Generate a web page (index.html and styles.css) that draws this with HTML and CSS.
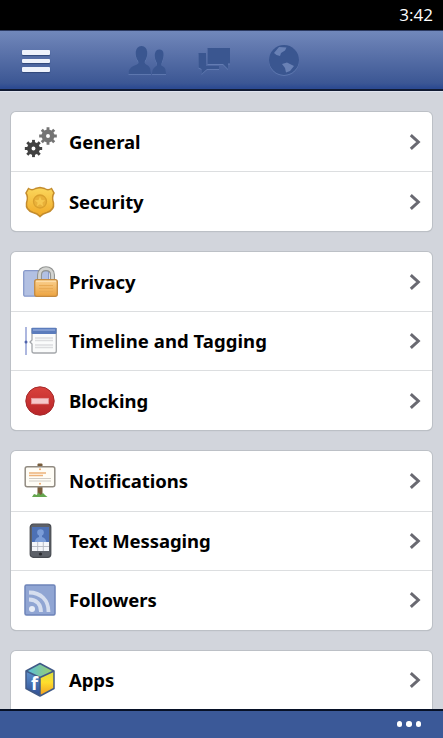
FILE: index.html
```html
<!DOCTYPE html>
<html lang="en">
<head>
    <meta charset="UTF-8">
    <meta name="viewport" content="width=device-width, initial-scale=1.0">
    <title>Settings</title>
    <link rel="stylesheet" href="styles.css">
</head>
<body>
    <svg class="defs" width="0" height="0">
        <symbol id="chevron" viewBox="0 0 12 18">
            <path d="M1.8 2.2 L9.3 9 L1.8 15.8" fill="none" stroke="#696971" stroke-width="3"/>
        </symbol>
        <symbol id="gear" viewBox="-10 -10 20 20">
            <circle r="4.700" fill="none" stroke="currentColor" stroke-width="5"/>
            <path d="M0 -9.8V-6M0 9.8V6M-9.8 0H-6M9.8 0H6M-6.9 -6.9L-4.5 -4.5M6.9 6.9L4.5 4.5M-6.9 6.9L-4.5 4.5M6.9 -6.9L4.5 -4.5" stroke="currentColor" stroke-width="3.2"/>
        </symbol>
    </svg>

    <div class="screen">
        <div class="status-bar">3:42</div>

        <header class="header">
            <div class="menu">
                <span></span>
                <span></span>
                <span></span>
            </div>
            <svg class="nav-icon friends" width="38" height="30" viewBox="0 0 38 30">
                <path d="M24 29 C24 24.500 26 22.500 28.500 21 C29.500 20 29 18.500 28.300 17 C25.500 11 26.500 4.500 31.300 4.500 C36.500 4.500 36.500 11 34 17 C33.200 19 33.200 20.500 34 21 C37 22.500 38 24 38 29Z"/>
                <path d="M0.500 29 C0.500 23 4 21.500 9 19.500 C11 18.500 10.500 17 10 16 C6.500 11 6.500 1 13.500 1 C20.500 1 20.500 11 17 16 C16.500 17 16.500 18.500 18 19.500 C21 21 23 23 23 29Z"/>
            </svg>
            <svg class="nav-icon messages" width="34" height="30" viewBox="0 0 34 30">
                <path d="M0.500 8 H8 V21 H21 V24 H9 L3.500 29 V24 L0.500 22.500Z"/>
                <path d="M9.500 3 H32 V18.500 H30 V24 L25 19 H9.500Z"/>
            </svg>
            <svg class="nav-icon globe" width="32" height="32" viewBox="0 0 32 32">
                <circle cx="16" cy="16" r="15"/>
                <path class="land" d="M6 9 L11 3 L18.500 3.500 L17 6.500 L13 9 L12 12 L8.500 11Z M14 20 L19 18.500 L26 22 L22 27 L18 28.500 L17 24Z"/>
            </svg>
        </header>

        <main class="content">
            <ul class="card">
                <li class="row">
                    <svg class="icon" width="34" height="36" viewBox="0 0 34 36">
                        <use class="gear-dark" href="#gear" x="1.500" y="15.500" width="18" height="18"/>
                        <use class="gear-light" href="#gear" x="16" y="3" width="18" height="18"/>
                    </svg>
                    <span class="label">General</span>
                    <svg class="chevron" width="12" height="18"><use href="#chevron"/></svg>
                </li>
                <li class="row">
                    <svg class="icon" width="34" height="36" viewBox="0 0 34 36">
                        <defs>
                            <linearGradient id="gold" x2="0" y2="1">
                                <stop offset="0" stop-color="#fbd75c"/>
                                <stop offset="1" stop-color="#f0a927"/>
                            </linearGradient>
                        </defs>
                        <path d="M5.500 4.500 Q9 7 12.500 4.500 L17 3.500 L21.500 4.500 Q25 7 28.500 4.500 L31 9 Q28.500 13 30.500 19 Q31.500 26 24 28.500 Q19.500 29.500 17 32.500 Q14.500 29.500 10 28.500 Q2.500 26 3.500 19 Q5.500 13 3 9Z" fill="url(#gold)" stroke="#c48c2d" stroke-width="1.500"/>
                        <circle cx="17" cy="17.500" r="6.500" fill="#e9b13a" stroke="#d9a02d" stroke-width="1.300"/>
                        <path d="M17 12.500 L18.500 16 L22.200 16.300 L19.400 18.700 L20.200 22.300 L17 20.300 L13.800 22.300 L14.600 18.700 L11.800 16.300 L15.500 16Z" fill="#f6c84f"/>
                    </svg>
                    <span class="label">Security</span>
                    <svg class="chevron" width="12" height="18"><use href="#chevron"/></svg>
                </li>
            </ul>

            <ul class="card">
                <li class="row">
                    <svg class="icon" width="36" height="36" viewBox="0 0 36 36">
                        <defs>
                            <linearGradient id="lock" x2="0" y2="1">
                                <stop offset="0" stop-color="#fad190"/>
                                <stop offset="1" stop-color="#eca340"/>
                            </linearGradient>
                        </defs>
                        <rect x="0.700" y="6.700" width="25" height="25.500" rx="1.500" fill="#b2c0e2" stroke="#8799ca" stroke-width="1.300"/>
                        <path d="M16.500 17 V11 C16.500 2.500 29.500 2.500 29.500 11 V17" fill="none" stroke="#929492" stroke-width="5"/>
                        <path d="M16.500 17 V11 C16.500 2.500 29.500 2.500 29.500 11 V17" fill="none" stroke="#d3d4d1" stroke-width="2.800"/>
                        <rect x="11.700" y="15.700" width="22.600" height="16.600" rx="2" fill="url(#lock)" stroke="#c48a40" stroke-width="1.300"/>
                        <path d="M16 21.500H30M16 24.500H30M16 27.500H30" stroke="#e9ab55"/>
                        <path d="M13 17.300H33" stroke="#ffe3b4"/>
                    </svg>
                    <span class="label">Privacy</span>
                    <svg class="chevron" width="12" height="18"><use href="#chevron"/></svg>
                </li>
                <li class="row">
                    <svg class="icon" width="34" height="36" viewBox="0 0 34 36">
                        <path d="M3 4V32" stroke="#adb7df" stroke-width="2"/>
                        <circle cx="3" cy="19" r="1.500" fill="#5064ac"/>
                        <path d="M9 5.700 H33.300 V28 Q33.300 30 31.300 30 H11 Q9 30 9 28 V21 L7 19 L9 17Z" fill="#fafbfb" stroke="#a4a7ab" stroke-width="1.300"/>
                        <rect x="8.500" y="4.700" width="25" height="6.300" rx="1" fill="#5b7cbc"/>
                        <path d="M10 7H32" stroke="#8ca6d8" stroke-width="1.500"/>
                        <path d="M12 15H30M12 17.500H30M12 22H30M12 24.500H30" stroke="#dcdddf" stroke-width="1.300"/>
                    </svg>
                    <span class="label timeline">Timeline and Tagging</span>
                    <svg class="chevron" width="12" height="18"><use href="#chevron"/></svg>
                </li>
                <li class="row">
                    <svg class="icon" width="34" height="36" viewBox="0 0 34 36">
                        <defs>
                            <linearGradient id="stop" x2="0" y2="1">
                                <stop offset="0" stop-color="#d9423c"/>
                                <stop offset="1" stop-color="#b92529"/>
                            </linearGradient>
                        </defs>
                        <circle cx="17" cy="18" r="14.200" fill="url(#stop)" stroke="#a52a2b"/>
                        <rect x="8.500" y="15.300" width="17" height="5.600" fill="#f5c8ca" stroke="#e99c9d" stroke-width="0.700"/>
                    </svg>
                    <span class="label">Blocking</span>
                    <svg class="chevron" width="12" height="18"><use href="#chevron"/></svg>
                </li>
            </ul>

            <ul class="card">
                <li class="row">
                    <svg class="icon" width="34" height="36" viewBox="0 0 34 36">
                        <rect x="14.500" y="0.500" width="5" height="33" rx="1" fill="#795d3b"/>
                        <path d="M9 34 L11 31 L14 32 L15.500 29.500 L17.500 32 L20 30 L22 32 L24.500 34Z" fill="#65a64e"/>
                        <rect x="2.200" y="3.700" width="29.600" height="20.100" rx="2" fill="#fffdf6" stroke="#918b82" stroke-width="1.500"/>
                        <path d="M6 10H23M6 12.500H20" stroke="#edb379" stroke-width="1.300"/>
                        <path d="M6 15.500H28M6 18H28" stroke="#d0ccc5"/>
                        <circle cx="17" cy="6.300" r="1" fill="#e9a66c"/>
                        <circle cx="17" cy="20.700" r="1" fill="#e9a66c"/>
                    </svg>
                    <span class="label">Notifications</span>
                    <svg class="chevron" width="12" height="18"><use href="#chevron"/></svg>
                </li>
                <li class="row">
                    <svg class="icon" width="34" height="36" viewBox="0 0 34 36">
                        <rect x="7.200" y="1.200" width="20.600" height="33.100" rx="3" fill="#5c6068" stroke="#484b51" stroke-width="1.200"/>
                        <rect x="9" y="4" width="17" height="23" fill="#4d71b5"/>
                        <circle cx="17.500" cy="9.500" r="3.300" fill="#7b9dd8"/>
                        <path d="M11.500 20 Q12 15 16 14 V11 H19 V14 Q23 15 23.500 20Z" fill="#7b9dd8"/>
                        <rect x="9" y="19" width="17" height="9" fill="#f4f6fa"/>
                        <path d="M14.700 19V28M20.300 19V28M9 23.500H26" stroke="#b4b8c2" stroke-width="0.900"/>
                        <circle cx="17.500" cy="31" r="1.600" fill="#292b30"/>
                    </svg>
                    <span class="label">Text Messaging</span>
                    <svg class="chevron" width="12" height="18"><use href="#chevron"/></svg>
                </li>
                <li class="row">
                    <svg class="icon" width="34" height="36" viewBox="0 0 34 36">
                        <rect x="2" y="3" width="30" height="30" rx="1.500" fill="#90a5d3" stroke="#6e84b9" stroke-width="1.500"/>
                        <circle cx="9" cy="27" r="3" fill="#e8edf7"/>
                        <path d="M6 17.500 C13.500 17.500 18 22 18 30 M6 10.500 C18 10.500 25.500 18 25.500 30" fill="none" stroke="#d6deef" stroke-width="3.800"/>
                    </svg>
                    <span class="label">Followers</span>
                    <svg class="chevron" width="12" height="18"><use href="#chevron"/></svg>
                </li>
            </ul>

            <ul class="card">
                <li class="row">
                    <svg class="icon" width="34" height="36" viewBox="0 0 34 36">
                        <defs>
                            <linearGradient id="cubeTop">
                                <stop offset="0" stop-color="#54bde3"/>
                                <stop offset="1" stop-color="#a0d063"/>
                            </linearGradient>
                            <linearGradient id="cubeLeft" x2="0" y2="1">
                                <stop offset="0" stop-color="#5e93ce"/>
                                <stop offset="1" stop-color="#304e93"/>
                            </linearGradient>
                            <linearGradient id="cubeRight" x2="0" y2="1">
                                <stop offset="0" stop-color="#d8df40"/>
                                <stop offset="0.450" stop-color="#ffde2d"/>
                                <stop offset="1" stop-color="#f09b22"/>
                            </linearGradient>
                        </defs>
                        <path d="M17 1.500 L31 9 L17 15.500 L3 9Z" fill="url(#cubeTop)"/>
                        <path d="M3 9 L17 15.500 V34 L3 26.500Z" fill="url(#cubeLeft)"/>
                        <path d="M31 9 L17 15.500 V34 L31 26.500Z" fill="url(#cubeRight)"/>
                        <path d="M17 1.500 L31 9 V26.500 L17 34 L3 26.500 V9Z M3 9 L17 15.500 L31 9 M17 15.500 V34" fill="none" stroke="#405a87" stroke-width="1.500" stroke-linejoin="round"/>
                        <text class="cube-letter" x="8" y="28">f</text>
                    </svg>
                    <span class="label">Apps</span>
                    <svg class="chevron" width="12" height="18"><use href="#chevron"/></svg>
                </li>
                <li class="row"></li>
            </ul>
        </main>

        <footer class="app-bar">
            <span class="dot"></span>
            <span class="dot"></span>
            <span class="dot"></span>
        </footer>
    </div>
</body>
</html>
```
FILE: styles.css
```css
* {
    box-sizing: border-box;
}
body {
    margin: 0;
    font-family: "Noto Sans", "Open Sans", sans-serif;
    background-color: #d2d5dc;
}
.defs {
    display: none;
}
.screen {
    display: flex;
    flex-direction: column;
    height: 738px;
    overflow: hidden;
}
.status-bar {
    flex: none;
    height: 30px;
    padding-right: 10px;
    background-color: #000;
    color: #fff;
    font-family: "Open Sans", sans-serif;
    font-size: 17px;
    line-height: 29px;
    text-align: right;
}
.header {
    flex: none;
    display: flex;
    align-items: center;
    height: 61px;
    padding-left: 22px;
    background: linear-gradient(#7188bb 0, #6279af 15px, #3c5794 52px, #2c4a91 57px);
    border-top: 1px solid #2b3960;
    border-bottom: 2px solid #111b33;
}
.menu {
    display: flex;
    flex-direction: column;
    gap: 4px;
    width: 28px;
    margin-top: 2px;
}
.menu span {
    height: 4.400px;
    border-radius: 1px;
    background-color: #eef2fb;
    box-shadow: 0 1px 1px #304779;
}
.nav-icon {
    fill: #3a5690;
    filter: drop-shadow(0 1px 0 rgba(130, 155, 205, 0.4));
}
.friends {
    margin: 0 0 0 78px;
}
.messages {
    margin: 0 0 0 32px;
}
.globe {
    margin-left: 36px;
}
.globe .land {
    fill: #6981b5;
}
.content {
    flex: 1;
    min-height: 0;
    padding: 20px 11px 0;
    overflow: hidden;
    border-top: 1px solid #dfe3ee;
}
.card {
    margin: 0 0 21px;
    padding: 0;
    list-style: none;
    background-color: #fff;
    border-radius: 5px;
    box-shadow: 0 0 0 1px #bcc0c6, 0 1px 1px 0 #a9adb3;
}
.row {
    display: flex;
    align-items: center;
    height: 59.200px;
    padding: 0 11px 0 12px;
}
.row + .row {
    border-top: 1px solid #dcdee0;
}
.row:last-child {
    height: 59.900px;
}
.icon {
    flex: none;
}
.label {
    flex: 1;
    margin-left: 12px;
    color: #000;
    font-size: 18.500px;
    font-weight: 700;
    line-height: 26px;
    letter-spacing: -0.080px;
}
.timeline {
    letter-spacing: 0.060px;
}
.icon[width="36"] + .label {
    margin-left: 10px;
}
.gear-dark {
    color: #414141;
}
.gear-light {
    color: #747474;
}
.cube-letter {
    fill: #fff;
    font-family: "Open Sans", sans-serif;
    font-size: 18px;
    font-weight: 700;
}
.app-bar {
    flex: none;
    display: flex;
    justify-content: flex-end;
    gap: 4px;
    height: 29px;
    padding: 10px 22px 0 0;
    background-color: #3b5998;
    border-top: 2px solid #071126;
}
.dot {
    width: 5.500px;
    height: 5.500px;
    border-radius: 50%;
    background-color: #fff;
}
```
